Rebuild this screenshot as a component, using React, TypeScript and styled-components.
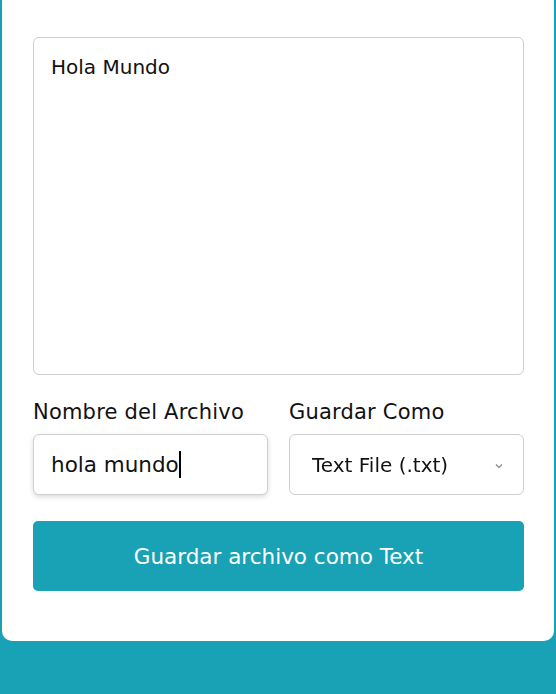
import React, { useEffect, useRef, useState } from "react";
import styled, { createGlobalStyle } from "styled-components";

const Global = createGlobalStyle`
  html, body {
    margin: 0;
    padding: 0;
    background: #19a1b6;
    min-height: 694px;
  }
  body {
    font-family: "DejaVu Sans", "Noto Sans", sans-serif;
    color: #111;
  }
  * { box-sizing: border-box; }
`;

const Card = styled.main`
  margin: -8px 2px 0 2px;
  background: #fff;
  border-radius: 10px;
  padding: 45px 30px 50px 31px;
  display: flex;
  flex-direction: column;
`;

const TextArea = styled.textarea`
  display: block;
  width: 100%;
  height: 338px;
  border: 1px solid #cfcfcf;
  border-radius: 6px;
  padding: 15px 17px 14px;
  font-family: inherit;
  font-size: 20px;
  line-height: 28px;
  color: #111;
  resize: none;
  outline: none;
`;

const Fields = styled.div`
  display: grid;
  grid-template-columns: 1fr 1fr;
  column-gap: 21px;
  margin-top: 24px;
`;

const Field = styled.label`
  display: flex;
  flex-direction: column;
  gap: 9px;
`;

const LabelText = styled.span`
  font-size: 21px;
  letter-spacing: 0.2px;
  line-height: 26px;
  color: #111;
`;

const InputWrap = styled.div`
  position: relative;
  height: 61px;
`;

const TextInput = styled.input`
  height: 100%;
  width: 100%;
  border: 1px solid #cfcfcf;
  border-radius: 6px;
  padding: 0 17px;
  font-family: inherit;
  font-size: 21.5px;
  color: #111;
  outline: none;
  box-shadow: 0 2px 5px rgba(0, 0, 0, 0.15);
  caret-color: transparent;
`;

const CaretLayer = styled.div`
  position: absolute;
  left: 18px;
  top: 0;
  height: 100%;
  display: flex;
  align-items: center;
  pointer-events: none;
`;

const Ghost = styled.span`
  font-size: 21.5px;
  color: transparent;
  white-space: pre;
`;

const CaretBar = styled.span`
  display: block;
  width: 2px;
  height: 27px;
  background: #000;
`;

const SelectWrap = styled.div`
  position: relative;
  height: 61px;
`;

const Select = styled.select`
  appearance: none;
  -webkit-appearance: none;
  width: 100%;
  height: 100%;
  border: 1px solid #cfcfcf;
  border-radius: 6px;
  padding: 0 40px 0 22px;
  background: #fff;
  font-family: inherit;
  font-size: 20px;
  color: #111;
  outline: none;
`;

const Chevron = styled.svg`
  position: absolute;
  right: 21px;
  top: 29px;
  width: 8px;
  height: 6px;
  pointer-events: none;
`;

const SaveButton = styled.button`
  margin-top: 26px;
  height: 70px;
  width: 100%;
  border: none;
  border-radius: 5px;
  background: #19a1b6;
  color: #fff;
  font-family: inherit;
  font-size: 21.5px;
  cursor: pointer;
`;

export default function App() {
  const inputRef = useRef<HTMLInputElement>(null);
  const [name, setName] = useState("hola mundo");
  useEffect(() => {
    const el = inputRef.current;
    if (el) {
      el.focus();
      el.setSelectionRange(el.value.length, el.value.length);
    }
  }, []);
  return (
    <>
      <Global />
      <Card>
        <TextArea defaultValue="Hola Mundo" />
        <Fields>
          <Field>
            <LabelText>Nombre del Archivo</LabelText>
            <InputWrap>
              <TextInput
                ref={inputRef}
                value={name}
                onChange={(e) => setName(e.target.value)}
              />
              <CaretLayer>
                <Ghost>{name}</Ghost>
                <CaretBar />
              </CaretLayer>
            </InputWrap>
          </Field>
          <Field as="div">
            <LabelText>Guardar Como</LabelText>
            <SelectWrap>
              <Select defaultValue="txt">
                <option value="txt">Text File (.txt)</option>
                <option value="json">JSON File (.json)</option>
                <option value="js">JavaScript File (.js)</option>
              </Select>
              <Chevron viewBox="0 0 8 6">
                <path d="M1 1.5 L4 4.5 L7 1.5" fill="none" stroke="#888" strokeWidth="1.2" />
              </Chevron>
            </SelectWrap>
          </Field>
        </Fields>
        <SaveButton>Guardar archivo como Text</SaveButton>
      </Card>
    </>
  );
}
